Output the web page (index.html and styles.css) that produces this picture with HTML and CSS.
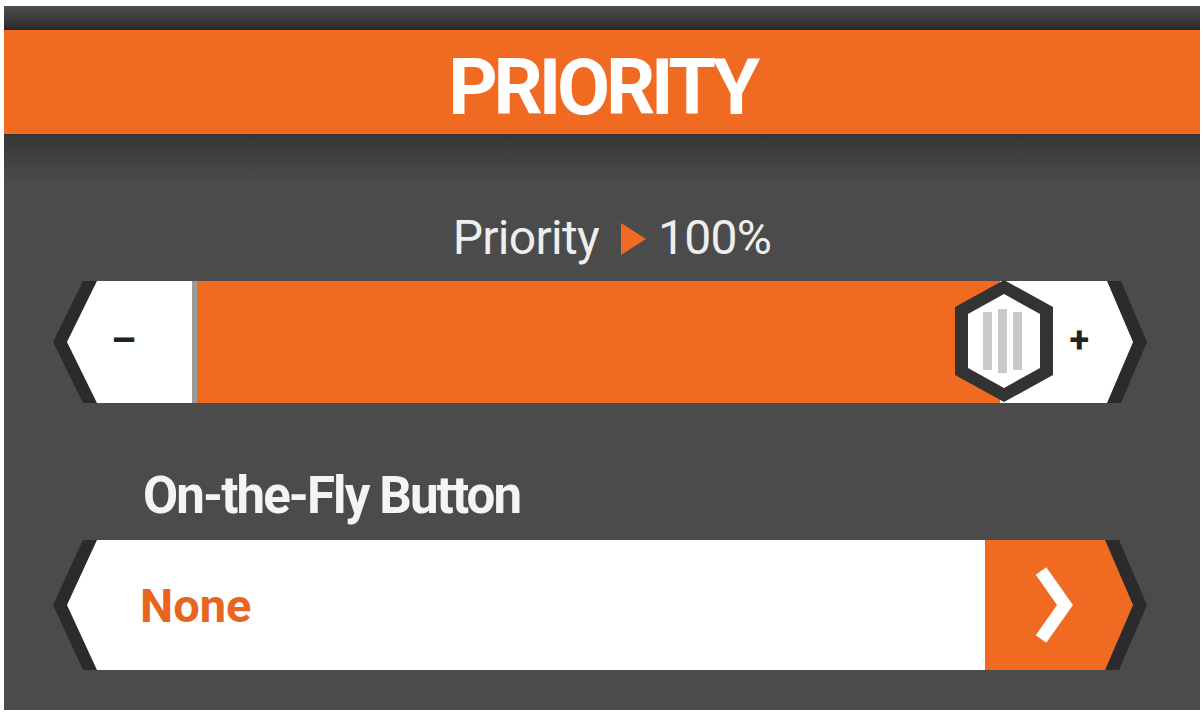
FILE: index.html
```html
<!DOCTYPE html>
<html lang="en">
<head>
    <meta charset="UTF-8">
    <meta name="viewport" content="width=device-width, initial-scale=1.0">
    <title>Priority</title>
    <link rel="stylesheet" href="styles.css">
</head>
<body>
    <div class="screen">
        <div class="status-strip"></div>

        <header class="title-bar">
            <h1>PRIORITY</h1>
        </header>

        <section class="content">
            <div class="value-label">
                <span>Priority</span>
                <span class="arrow"></span>
                <span>100%</span>
            </div>

            <!-- slider -->
            <div class="slider">
                <svg class="cap" width="144" height="122" viewBox="0 0 144 122">
                    <polygon points="30,0 0,61 30,122 44,122 14,61 44,0" fill="#2b2b2b"/>
                    <polygon points="44,0 14,61 44,122 139,122 139,0" fill="#ffffff"/>
                    <rect x="139" y="0" width="5" height="122" fill="#9a9a9a"/>
                </svg>
                <span class="minus">&ndash;</span>
                <div class="slider-fill"></div>
                <svg class="cap" width="147" height="122" viewBox="0 0 147 122">
                    <polygon points="107,0 121,0 147,61 121,122 107,122 133,61" fill="#2b2b2b"/>
                    <polygon points="0,0 107,0 133,61 107,122 0,122" fill="#ffffff"/>
                </svg>
                <span class="plus">+</span>
                <svg class="knob" width="98" height="122" viewBox="0 0 98 122">
                    <polygon points="49,0 98,27 98,95 49,122 0,95 0,27" fill="#333333"/>
                    <polygon points="49,14 85,34 85,88 49,108 13,88 13,34" fill="#ffffff"/>
                    <rect x="28" y="32" width="9" height="58" fill="#c9c9c9"/>
                    <rect x="43" y="29" width="9" height="64" fill="#c9c9c9"/>
                    <rect x="58" y="32" width="9" height="58" fill="#c9c9c9"/>
                </svg>
            </div>

            <h2 class="field-label">On-the-Fly Button</h2>

            <!-- dropdown -->
            <div class="dropdown">
                <svg class="cap" width="44" height="130" viewBox="0 0 44 130">
                    <polygon points="30,0 0,65 30,130 44,130 14,65 44,0" fill="#2b2b2b"/>
                    <polygon points="44,0 14,65 44,130" fill="#ffffff"/>
                </svg>
                <div class="dropdown-value">None</div>
                <div class="dropdown-btn">
                    <svg width="40" height="76" viewBox="0 0 40 76">
                        <polyline points="6,4 30,38 6,72" fill="none" stroke="#ffffff" stroke-width="13"/>
                    </svg>
                </div>
                <svg class="cap" width="42" height="130" viewBox="0 0 42 130">
                    <polygon points="0,0 14,0 42,65 14,130 0,130 28,65" fill="#2b2b2b"/>
                    <polygon points="0,0 28,65 0,130" fill="#f06a22"/>
                </svg>
            </div>
        </section>
    </div>
</body>
</html>
```

FILE: styles.css
```css
body {
    margin: 0;
    background-color: #ffffff;
    font-family: Roboto, "Liberation Sans", Arial, sans-serif;
}
.screen {
    margin: 6px 3px 0 4px;
    height: 704px;
    background-color: #4b4b4b;
    display: flex;
    flex-direction: column;
}
.status-strip {
    height: 24px;
    background: linear-gradient(#4d4d4d, #3a3a3a 60%, #262626);
}
.title-bar {
    height: 104px;
    background-color: #f06a22;
    display: flex;
    align-items: center;
    justify-content: center;
}
.title-bar h1 {
    margin: 0;
    padding-top: 12px;
    color: #ffffff;
    font-size: 77px;
    font-weight: 700;
    letter-spacing: -4.2px;
    line-height: 1;
}
.content {
    flex: 1;
    padding: 0 53px 0 49px;
    background: linear-gradient(#363636, #3f3f3f 20px, #4b4b4b 48px);
}
.value-label {
    margin-top: 62px;
    height: 84px;
    padding-left: 24px;
    display: flex;
    align-items: center;
    justify-content: center;
    color: #eeeeee;
    font-size: 48px;
    letter-spacing: -0.7px;
    line-height: 1;
}
.arrow {
    width: 0;
    height: 0;
    border-top: 16px solid transparent;
    border-bottom: 16px solid transparent;
    border-left: 25px solid #f06a22;
    margin: 2px 12px 0 22px;
}
.slider {
    position: relative;
    display: flex;
    height: 122px;
    margin-top: 1px;
}
.cap {
    display: block;
    flex-shrink: 0;
}
.slider-fill {
    flex: 1;
    background-color: #f06a22;
}
.minus {
    position: absolute;
    left: 58px;
    top: 40px;
    font-size: 40px;
    font-weight: 700;
    color: #222222;
    line-height: 1;
}
.plus {
    position: absolute;
    right: 58px;
    top: 41px;
    font-size: 36px;
    font-weight: 700;
    color: #222222;
    line-height: 1;
}
.knob {
    position: absolute;
    right: 94px;
    top: -1px;
}
.field-label {
    margin: 67px 0 0 90px;
    height: 70px;
    color: #f4f4f4;
    font-size: 51px;
    font-weight: 700;
    letter-spacing: -1.9px;
    line-height: 1;
}
.dropdown {
    display: flex;
    height: 130px;
}
.dropdown-value {
    flex: 1;
    background-color: #ffffff;
    color: #e8651f;
    font-size: 47px;
    font-weight: 700;
    padding-left: 43px;
    display: flex;
    align-items: center;
}
.dropdown-btn {
    width: 120px;
    padding-left: 50px;
    box-sizing: border-box;
    background-color: #f06a22;
    display: flex;
    align-items: center;
}
```
